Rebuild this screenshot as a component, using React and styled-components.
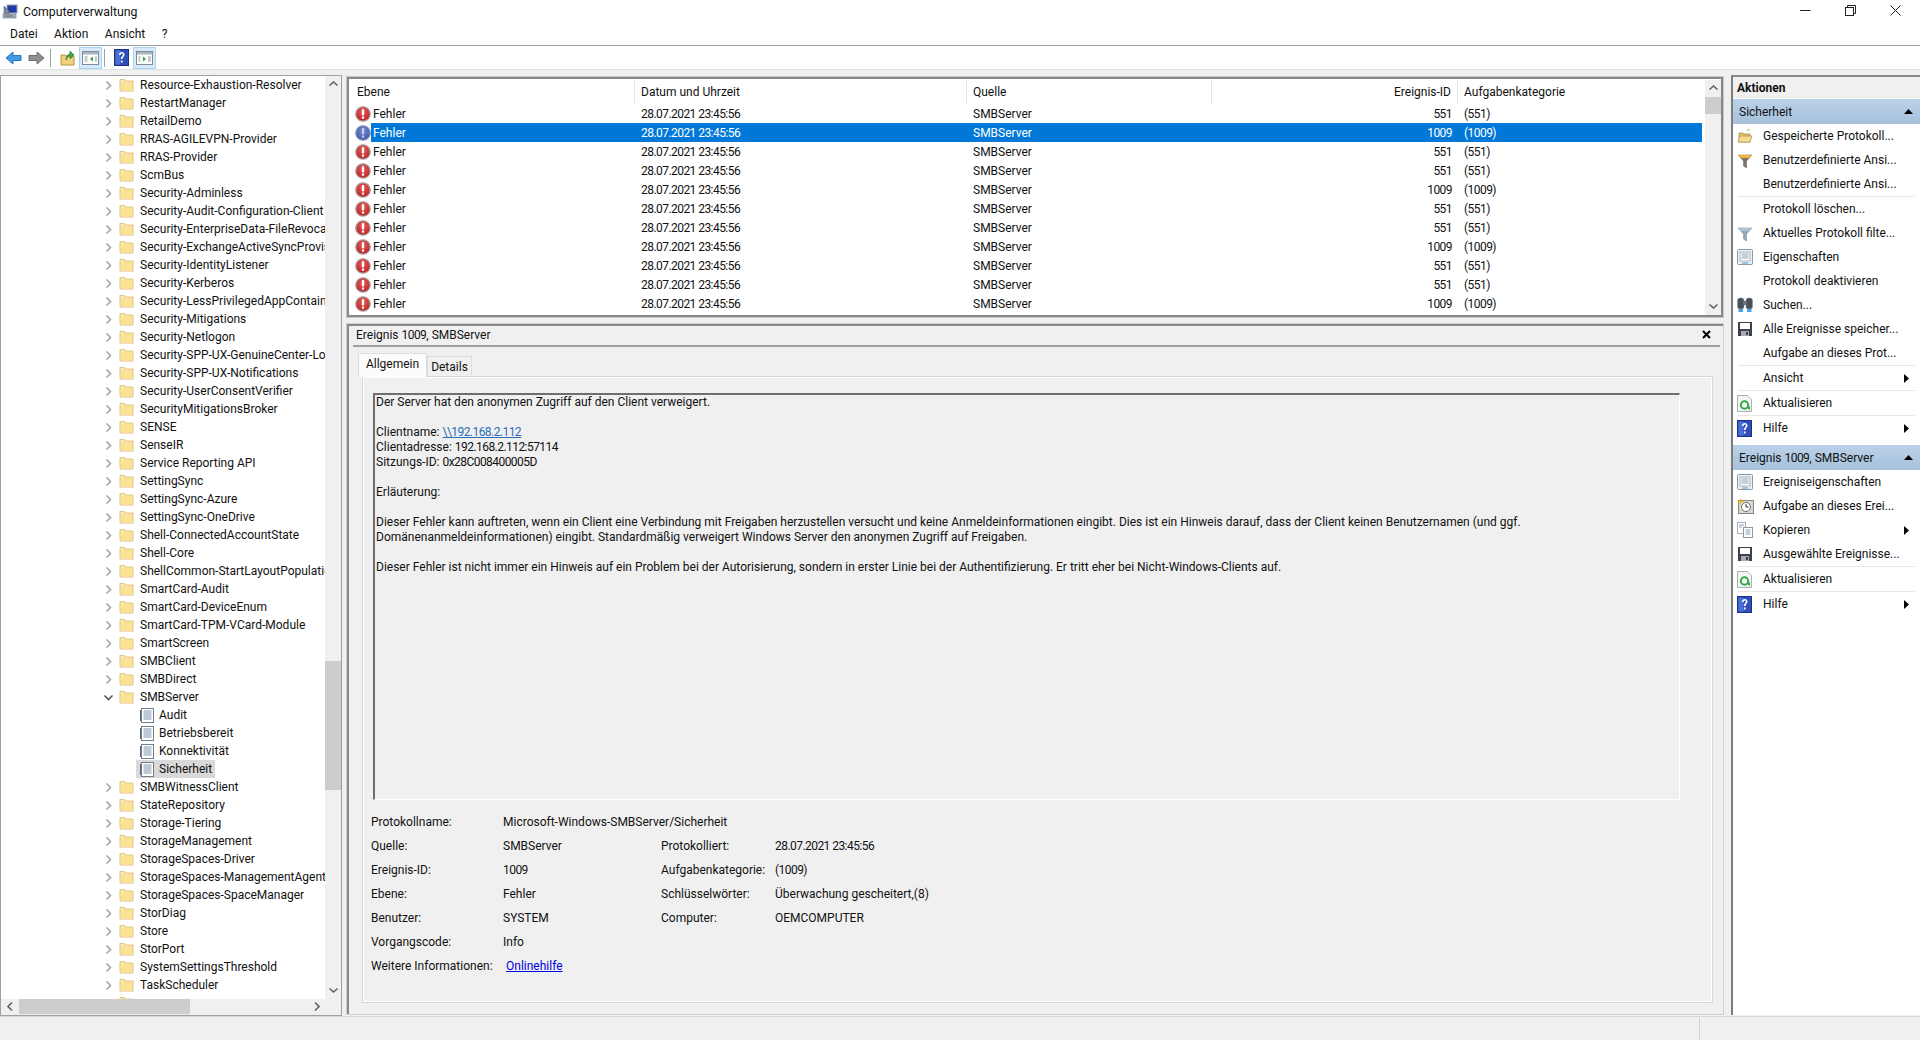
import React from 'react';
import styled, { createGlobalStyle } from 'styled-components';

const GlobalStyle = createGlobalStyle`
  html, body { margin: 0; padding: 0; background: #f0f0f0; }
  body { font-family: Roboto, "Open Sans", "Liberation Sans", sans-serif; font-size: 12px; color: #111; }
  * { box-sizing: border-box; }
`;

/* window chrome */
const Page = styled.div`
  width: 1920px;
  height: 1040px;
  display: flex;
  flex-direction: column;
  overflow: hidden;
  background: #f0f0f0;
`;

const TitleBar = styled.div`
  height: 23px;
  display: flex;
  align-items: center;
  background: #fff;
  padding-left: 2px;
  gap: 5px;
  font-size: 12.3px;
`;

const TitleText = styled.span`
  flex: 1;
`;

const WinControls = styled.div`
  display: flex;
  align-items: center;
  gap: 34px;
  padding-right: 19px;
  margin-top: -3px;
`;

const MenuBar = styled.div`
  height: 23px;
  display: flex;
  align-items: center;
  background: #fff;
  border-bottom: 1px solid #a0a0a0;
  padding: 0 0 1px 10px;
  gap: 16.5px;
`;

const Toolbar = styled.div`
  height: 24px;
  display: flex;
  align-items: center;
  background: #fff;
  border-bottom: 1px solid #e2e2e2;
  padding-left: 5px;
`;

const ArrowSlot = styled.div`
  display: flex;
  margin-left: ${(p) => p.$gap || 0}px;
`;

const ToolButton = styled.div`
  width: 23px;
  height: 22px;
  display: flex;
  align-items: center;
  justify-content: center;
  background: ${(p) => (p.$active ? '#d8eafa' : 'transparent')};
  border: 1px solid ${(p) => (p.$active ? '#a8d4f6' : 'transparent')};
`;

const ToolSep = styled.div`
  width: 1px;
  height: 18px;
  background: #a0a0a0;
  margin: 0 ${(p) => p.$r}px 0 ${(p) => p.$l}px;
`;

const Workspace = styled.div`
  flex: 1;
  display: flex;
  gap: 4px;
  padding-top: 5px;
  min-height: 0;
`;

const StatusBar = styled.div`
  height: 24px;
  border-top: 1px solid #d4d4d4;
  display: flex;
  justify-content: flex-end;
  padding-right: 220px;
`;

const StatusDivider = styled.div`
  width: 1px;
  height: 21px;
  margin-top: 1px;
  background: #d0d0d0;
`;

/* digits are narrower in the original UI font */
const Num = styled.span`
  letter-spacing: -0.55px;
`;

/* left tree */
const TreePane = styled.div`
  width: 342px;
  border: 1px solid #a0a0a0;
  display: flex;
  flex-direction: column;
  background: #f0f0f0;
`;

const TreeBody = styled.div`
  flex: 1;
  min-height: 0;
  display: flex;
`;

const TreeList = styled.div`
  flex: 1;
  min-width: 0;
  background: #fff;
  overflow: hidden;
`;

const TreeRow = styled.div`
  height: 18px;
  display: flex;
  align-items: center;
  white-space: nowrap;
  padding-left: 99px;
`;

const Chevron = styled.span`
  width: 16px;
  margin-right: 3px;
  display: flex;
  justify-content: center;
  flex: none;
`;

const RowLabel = styled.span`
  margin-left: 6px;
`;

const ChildRow = styled.div`
  height: 18px;
  display: flex;
  align-items: center;
  white-space: nowrap;
  margin-left: 135px;
  padding: 0 4px;
  width: ${(p) => (p.$current ? '79px' : 'auto')};
  background: ${(p) => (p.$current ? '#d9d9d9' : 'transparent')};
`;

const ChildLabel = styled.span`
  margin-left: 5px;
`;

const VBar = styled.div`
  width: 16px;
  flex: none;
  display: flex;
  flex-direction: column;
  align-items: center;
  background: #f0f0f0;
`;

const BarArrow = styled.div`
  height: 17px;
  width: 100%;
  flex: none;
  display: flex;
  align-items: center;
  justify-content: center;
`;

const BarTrack = styled.div`
  flex: 1;
  width: 100%;
  min-height: 0;
`;

const BarThumb = styled.div`
  width: 100%;
  height: ${(p) => p.$size}px;
  margin-top: ${(p) => p.$offset}px;
  background: #cdcdcd;
`;

const HBar = styled.div`
  height: 16px;
  flex: none;
  display: flex;
  align-items: flex-start;
  padding-right: 16px;
`;

const HArrow = styled.div`
  width: 18px;
  height: 15px;
  flex: none;
  display: flex;
  align-items: center;
  justify-content: center;
`;

const HTrack = styled.div`
  flex: 1;
  height: 15px;
`;

const HThumb = styled.div`
  width: 171px;
  height: 15px;
  background: #cdcdcd;
`;

/* centre column */
const CenterColumn = styled.div`
  width: 1379px;
  margin: 1px 0 1px 0;
  display: flex;
  flex-direction: column;
  gap: 5px;
`;

const ListPane = styled.div`
  height: 242px;
  flex: none;
  display: flex;
  background: #fff;
  border: 1px solid #c6c6c6;
  box-shadow: inset 0 0 0 2px #888;
  padding: 3px 2px 2px 4px;
  margin-right: 1px;
`;

const ListMain = styled.div`
  flex: 1;
  min-width: 0;
  overflow: hidden;
`;

const ColumnHeader = styled.div`
  height: 24px;
  display: grid;
  grid-template-columns: 284px 332px 245px 246px auto;
  width: 1351px;
  align-items: stretch;
`;

const HeadCell = styled.div`
  display: flex;
  align-items: center;
  padding: 0 6px;
  border-right: 1px solid #e5e5e5;
  justify-content: ${(p) => (p.$right ? 'flex-end' : 'flex-start')};
  &:last-child { border-right: none; }
`;

const EventRow = styled.div`
  height: 19px;
  display: grid;
  grid-template-columns: 284px 332px 245px 246px auto;
  width: 1351px;
  align-items: center;
`;

const EventLevel = styled.div`
  display: flex;
  align-items: center;
  height: 19px;
  padding-left: 4px;
`;

const SelectBand = styled.div`
  height: 19px;
  display: flex;
  align-items: center;
  flex: 1;
  background: ${(p) => (p.$selected ? '#0078d7' : 'transparent')};
  color: ${(p) => (p.$selected ? '#fff' : 'inherit')};
  padding-left: 2px;
`;

const EventCell = styled.div`
  height: 19px;
  display: flex;
  align-items: center;
  padding: 0 6px;
  background: ${(p) => (p.$selected ? '#0078d7' : 'transparent')};
  color: ${(p) => (p.$selected ? '#fff' : 'inherit')};
  justify-content: ${(p) => (p.$right ? 'flex-end' : 'flex-start')};
`;

const DetailPane = styled.div`
  flex: 1;
  min-height: 0;
  display: flex;
  flex-direction: column;
  border: 1px solid #d0d0d0;
  box-shadow: inset 2px 2px 0 #888;
  padding: 2px 3px 11px 6px;
  margin-right: 1px;
`;

const DetailHead = styled.div`
  height: 21px;
  flex: none;
  display: flex;
  align-items: center;
  justify-content: space-between;
  border-bottom: 2px solid #a0a0a0;
  padding: 0 9px 2px 3px;
`;

const Tabs = styled.div`
  display: flex;
  align-items: flex-end;
  height: 29px;
  flex: none;
  padding-left: 5px;
`;

const Tab = styled.div`
  display: flex;
  align-items: center;
  justify-content: center;
  width: ${(p) => p.$w}px;
  height: ${(p) => (p.$active ? 24 : 20)}px;
  padding-bottom: ${(p) => (p.$active ? 3 : 0)}px;
  background: ${(p) => (p.$active ? '#fcfcfc' : '#f0f0f0')};
  border: 1px solid #dcdcdc;
  border-bottom: none;
  margin-bottom: ${(p) => (p.$active ? -1 : 0)}px;
  z-index: 1;
`;

const TabPanel = styled.div`
  flex: 1;
  min-height: 0;
  margin: 0 7px 0 9px;
  border: 1px solid #d6d6d6;
  box-shadow: inset 0 0 0 1px #fff;
  padding: 16px 32px 0 10px;
  display: flex;
  flex-direction: column;
`;

const MessageBox = styled.div`
  height: 407px;
  flex: none;
  border: 2px solid #6e6e6e;
  border-right: 1px solid #fff;
  border-bottom: 1px solid #fff;
  padding: 0 1px;
  line-height: 15px;
`;

const LinkText = styled.span`
  color: ${(p) => p.$color || '#2a6db5'};
  text-decoration: underline;
  margin-left: ${(p) => p.$indent || 0}px;
`;

const Fields = styled.div`
  margin-top: 10px;
  margin-left: -2px;
  display: grid;
  grid-template-columns: 132px 158px 114px auto;
  grid-auto-rows: 24px;
  align-items: center;
  white-space: nowrap;
`;

const FullValue = styled.div`
  grid-column: span 3;
`;

/* right actions */
const ActionsPane = styled.div`
  flex: 1;
  min-width: 0;
  display: flex;
  flex-direction: column;
  background: #fff;
  border-left: 2px solid #7d7d7d;
  border-top: 2px solid #8a8a8a;
  margin-left: 2px;
  margin-bottom: 1px;
`;

const ActionsHead = styled.div`
  height: 21px;
  flex: none;
  display: flex;
  align-items: center;
  padding-left: 4px;
  background: #f0f0f0;
  font-weight: 700;
`;

const GroupHead = styled.div`
  height: 25px;
  flex: none;
  display: flex;
  align-items: center;
  justify-content: space-between;
  padding: 0 7px 0 6px;
  margin-top: 1px;
  background: linear-gradient(#bad1e8, #a7c1dc);
`;

const Action = styled.div`
  height: ${(p) => (p.$line ? 25 : 24)}px;
  flex: none;
  display: flex;
  align-items: center;
  padding: ${(p) => (p.$line ? '1px' : '0')} 9px 0 4px;
  background: ${(p) => (p.$line ? 'linear-gradient(#e6e6e6, #e6e6e6) 5px 0 / calc(100% - 10px) 1px no-repeat' : 'none')};
`;

const ActionIcon = styled.span`
  width: 21px;
  height: 18px;
  flex: none;
  display: flex;
  align-items: center;
  margin-right: 5px;
`;

const ActionText = styled.span`
  flex: 1;
  white-space: nowrap;
`;

const GroupGap = styled.div`
  height: ${(p) => p.$h}px;
  flex: none;
`;

/* drawings */
const AppIcon = () => (
  <svg width="16" height="16" viewBox="0 0 16 16">
    <rect x="5" y="1" width="10" height="8" fill="#2f3f8f" stroke="#8fa0b8" />
    <rect x="6.5" y="2.5" width="7" height="5" fill="#1b3bb0" />
    <path d="M2 2l5 5v3H2z" fill="#7b8a9e" stroke="#56616e" strokeWidth=".6" />
    <rect x="1" y="10" width="13" height="4" fill="#a9b1ba" stroke="#6f7780" strokeWidth=".6" />
    <rect x="3" y="11.5" width="8" height="1" fill="#5c6570" />
  </svg>
);

const Minimize = () => (
  <svg width="11" height="11" viewBox="0 0 11 11"><path d="M0 5.5h10.5" stroke="#222" /></svg>
);

const Restore = () => (
  <svg width="11" height="11" viewBox="0 0 11 11" fill="none" stroke="#222">
    <rect x=".5" y="2.5" width="8" height="8" />
    <path d="M2.5 2.5v-2h8v8h-2" />
  </svg>
);

const CloseIcon = () => (
  <svg width="11" height="11" viewBox="0 0 11 11"><path d="M.5.5l10 10M10.5.5l-10 10" stroke="#222" /></svg>
);

const ArrowIcon = ({ back, color, edge }) => (
  <svg width="17" height="14" viewBox="0 0 17 14">
    <path
      d={back ? 'M1 7l7-6v3.500h8v5H8V13z' : 'M16 7L9 1v3.500H1v5h8V13z'}
      fill={color}
      stroke={edge}
      strokeLinejoin="round"
    />
  </svg>
);

const UpFolder = () => (
  <svg width="15" height="16" viewBox="0 0 15 16">
    <path d="M1 5h4l1 1h8v9H1z" fill="#f1cf7c" stroke="#b8933f" />
    <path d="M6 10c0-4 2-6 4-6V1l4 4-4 4V6c-1.500 0-3 1-4 4z" fill="#3fa64b" stroke="#2b7c35" strokeWidth=".7" />
  </svg>
);

const PaneIcon = ({ right }) => (
  <svg width="17" height="14" viewBox="0 0 17 14">
    <rect x=".5" y=".5" width="16" height="13" fill="#fff" stroke="#7d8b99" />
    <rect x="1" y="1" width="15" height="2.500" fill="#a9b7c4" />
    {right ? (
      <>
        <path d="M2.500 6h2M2.500 8h2M2.500 10h2M12 6h3M12 8h3M12 10h3" stroke="#8c98a4" />
        <path d="M7 5.500l3 2.500-3 2.500z" fill="#37a03f" />
      </>
    ) : (
      <>
        <path d="M2.500 6h3M2.500 8h3M2.500 10h3M13 6h2M13 8h2M13 10h2" stroke="#8c98a4" />
        <path d="M11 5.500L8 8l3 2.500z" fill="#37a03f" />
      </>
    )}
  </svg>
);

const HelpIcon = () => (
  <svg width="15" height="17" viewBox="0 0 15 17">
    <rect x=".5" y=".5" width="14" height="16" fill="#2f4fb8" stroke="#1c2f80" />
    <rect x="1.500" y="1.500" width="5" height="14" fill="#4a6fd6" />
    <path
      d="M5 6c0-2 1.200-3 2.800-3S10.500 4 10.500 5.800c0 2-2 2.200-2 4.200H7c0-2.800 1.800-2.800 1.800-4.300C8.800 5 8.400 4.500 7.800 4.500S6.800 5 6.700 6z"
      fill="#fff"
    />
    <rect x="7" y="11.500" width="1.600" height="2" fill="#fff" />
  </svg>
);

const Chev = ({ open }) => (
  <svg width="11" height="11" viewBox="0 0 11 11" fill="none" stroke={open ? '#555' : '#a6a6a6'} strokeWidth="1.600">
    <path d={open ? 'M1.500 3.500l4 4 4-4' : 'M3.500 1.500l4 4-4 4'} />
  </svg>
);

const FolderIcon = () => (
  <svg width="15" height="14" viewBox="0 0 15 14" style={{ flex: 'none' }}>
    <path d="M1 1.500h4.500V3H14v10H1z" fill="#fdeab0" stroke="#dfc47c" />
    <rect x="2" y="4" width="11" height="8.500" fill="#fbe295" />
  </svg>
);

const LogIcon = () => (
  <svg width="14" height="15" viewBox="0 0 14 15" style={{ flex: 'none' }}>
    <rect x="1.500" y=".5" width="12" height="14" fill="#fff" stroke="#6f7d8c" />
    <path d="M3.500 3h8M3.500 5h8M3.500 7h8M3.500 9h8M3.500 11h8" stroke="#7d94ad" />
    <path d="M.5 2v11" stroke="#5a6875" />
  </svg>
);

const ErrorIcon = ({ selected }) => (
  <svg width="16" height="16" viewBox="0 0 16 16" style={{ flex: 'none' }}>
    <defs>
      <radialGradient id={selected ? 'errSel' : 'errNorm'} cx="50%" cy="35%" r="65%">
        <stop offset="0" stopColor={selected ? '#7a86d0' : '#e85a5a'} />
        <stop offset="1" stopColor={selected ? '#3f5aa8' : '#bb2222'} />
      </radialGradient>
    </defs>
    <circle cx="8" cy="8" r="7.200" fill={`url(#${selected ? 'errSel' : 'errNorm'})`} stroke={selected ? '#7f8fb8' : '#a89a9a'} strokeWidth="1.300" />
    <rect x="6.800" y="3" width="2.400" height="6.500" rx=".8" fill={selected ? '#c8ccf0' : '#fff'} />
    <rect x="6.900" y="10.500" width="2.200" height="2.200" fill={selected ? '#c8ccf0' : '#fff'} />
  </svg>
);

const SmallArrow = ({ dir }) => {
  const paths = {
    up: 'M1.500 6.500L5.500 3l4 3.500',
    down: 'M1.500 3.500l4 3.500 4-3.500',
    left: 'M7 1.500L3 5.500l4 4',
    right: 'M4 1.500l4 4-4 4',
  };
  return (
    <svg width="11" height="11" viewBox="0 0 11 11" fill="none" stroke="#606060" strokeWidth="1.600">
      <path d={paths[dir]} />
    </svg>
  );
};

const Tri = ({ right }) => (
  <svg width="9" height="9" viewBox="0 0 9 9">
    <path d={right ? 'M2 0l5 4.500L2 9z' : 'M0 7l4.500-5L9 7z'} fill="#000" />
  </svg>
);

const X = () => (
  <svg width="9" height="9" viewBox="0 0 9 9"><path d="M1 1l7 7M8 1L1 8" stroke="#000" strokeWidth="2" /></svg>
);

const OpenLogIcon = () => (
  <svg width="16" height="16" viewBox="0 0 16 16">
    <path d="M2 5h4l1 1h6v8H2z" fill="#e3c272" stroke="#a88a45" strokeWidth=".8" />
    <path d="M1 14l2-6h12l-2 6z" fill="#f6dc92" stroke="#b6964c" strokeWidth=".8" />
    <path d="M10 2h3" stroke="#7ac27a" />
  </svg>
);

const FunnelIcon = ({ star }) => (
  <svg width="16" height="17" viewBox="0 0 16 17">
    <path d="M1 3h14L9.500 9v7L6.500 14V9z" fill={star ? '#7d7368' : '#90a7bd'} stroke={star ? '#6a6055' : '#6f8599'} strokeWidth=".5" />
    <path d="M1 3h14l-3 3H4z" fill={star ? '#f3b33d' : '#a9c3d6'} />
  </svg>
);

const PropsIcon = () => (
  <svg width="16" height="16" viewBox="0 0 16 16">
    <rect x=".5" y=".5" width="15" height="15" rx="1" fill="#eef1f3" stroke="#8d98a3" />
    <rect x="3" y="3" width="10" height="9" fill="#fff" stroke="#a9b3bd" />
    <path d="M4.500 5h7M4.500 7h7M4.500 9h7" stroke="#8aa0b4" />
    <path d="M5 14h6" stroke="#5cb0e0" strokeWidth="1.200" />
  </svg>
);

const FindIcon = () => (
  <svg width="16" height="16" viewBox="0 0 16 16">
    <rect x=".5" y="1" width="6.500" height="11" rx="2.500" fill="#4a5058" stroke="#8a9098" strokeWidth=".5" />
    <rect x="9" y="1" width="6.500" height="11" rx="2.500" fill="#4a5058" stroke="#8a9098" strokeWidth=".5" />
    <rect x="6" y="4" width="4" height="4" fill="#6a7078" />
    <rect x="1.500" y="12" width="4.500" height="3" fill="#4da3dc" />
    <rect x="10" y="12" width="4.500" height="3" fill="#4da3dc" />
  </svg>
);

const SaveIcon = () => (
  <svg width="16" height="16" viewBox="0 0 16 16">
    <path d="M1 1h14v14H1z" fill="#3d4248" />
    <rect x="3" y="2" width="10" height="6" fill="#fff" />
    <rect x="4" y="10" width="8" height="5" fill="#a8acb0" />
    <rect x="9" y="11" width="2" height="3" fill="#3d4248" />
  </svg>
);

const RefreshIcon = () => (
  <svg width="15" height="17" viewBox="0 0 15 17">
    <path d="M.5.5h10l4 4v12H.5z" fill="#f4f5f6" stroke="#a9adb2" />
    <circle cx="7.500" cy="10" r="3.700" fill="none" stroke="#38a848" strokeWidth="2" />
    <path d="M10 13l3 2v-4z" fill="#38a848" />
  </svg>
);

const TaskIcon = () => (
  <svg width="17" height="17" viewBox="0 0 17 17">
    <rect x="1.500" y="2.500" width="15" height="13" fill="#ddd8d2" stroke="#8c857c" />
    <circle cx="9" cy="9" r="4.500" fill="#fff" stroke="#6c6c6c" />
    <path d="M9 6v3h2.500" fill="none" stroke="#333" />
    <path d="M3.500 0l1 2.500 2.500 1-2.500 1-1 2.500-1-2.500L0 3.500l2.500-1z" fill="#f0b52c" />
  </svg>
);

const CopyIcon = () => (
  <svg width="16" height="16" viewBox="0 0 16 16">
    <rect x=".5" y=".5" width="8" height="11" fill="#fff" stroke="#a6adb5" />
    <rect x="6.500" y="5.500" width="9" height="10" fill="#fff" stroke="#8f97a0" />
    <path d="M2 3h5M2 5h3M8.500 8h5M8.500 10h5M8.500 12h5" stroke="#8aa0b4" />
  </svg>
);

/* data */
const treeItems = [
  'Resource-Exhaustion-Resolver', 'RestartManager', 'RetailDemo', 'RRAS-AGILEVPN-Provider', 'RRAS-Provider', 'ScmBus',
  'Security-Adminless', 'Security-Audit-Configuration-Client', 'Security-EnterpriseData-FileRevocation',
  'Security-ExchangeActiveSyncProvisioning', 'Security-IdentityListener', 'Security-Kerberos',
  'Security-LessPrivilegedAppContainer', 'Security-Mitigations', 'Security-Netlogon',
  'Security-SPP-UX-GenuineCenter-Logging', 'Security-SPP-UX-Notifications', 'Security-UserConsentVerifier',
  'SecurityMitigationsBroker', 'SENSE', 'SenseIR', 'Service Reporting API', 'SettingSync', 'SettingSync-Azure',
  'SettingSync-OneDrive', 'Shell-ConnectedAccountState', 'Shell-Core', 'ShellCommon-StartLayoutPopulation',
  'SmartCard-Audit', 'SmartCard-DeviceEnum', 'SmartCard-TPM-VCard-Module', 'SmartScreen', 'SMBClient', 'SMBDirect',
  { name: 'SMBServer', open: true },
  { name: 'Audit', child: true }, { name: 'Betriebsbereit', child: true }, { name: 'Konnektivität', child: true },
  { name: 'Sicherheit', child: true, current: true },
  'SMBWitnessClient', 'StateRepository', 'Storage-Tiering', 'StorageManagement', 'StorageSpaces-Driver',
  'StorageSpaces-ManagementAgent', 'StorageSpaces-SpaceManager', 'StorDiag', 'Store', 'StorPort',
  'SystemSettingsThreshold', 'TaskScheduler', '\u00a0',
];

const eventIds = ['551', '1009', '551', '551', '1009', '551', '551', '1009', '551', '551', '1009', '551'];

const firstActions = [
  { icon: <OpenLogIcon />, text: 'Gespeicherte Protokoll...' },
  { icon: <FunnelIcon star />, text: 'Benutzerdefinierte Ansi...' },
  { text: 'Benutzerdefinierte Ansi...' },
  { text: 'Protokoll löschen...', line: true },
  { icon: <FunnelIcon />, text: 'Aktuelles Protokoll filte...' },
  { icon: <PropsIcon />, text: 'Eigenschaften' },
  { text: 'Protokoll deaktivieren' },
  { icon: <FindIcon />, text: 'Suchen...' },
  { icon: <SaveIcon />, text: 'Alle Ereignisse speicher...' },
  { text: 'Aufgabe an dieses Prot...' },
  { text: 'Ansicht', more: true, line: true },
  { icon: <RefreshIcon />, text: 'Aktualisieren', line: true },
  { icon: <HelpIcon />, text: 'Hilfe', more: true, line: true },
];

const secondActions = [
  { icon: <PropsIcon />, text: 'Ereigniseigenschaften' },
  { icon: <TaskIcon />, text: 'Aufgabe an dieses Erei...' },
  { icon: <CopyIcon />, text: 'Kopieren', more: true },
  { icon: <SaveIcon />, text: 'Ausgewählte Ereignisse...' },
  { icon: <RefreshIcon />, text: 'Aktualisieren', line: true },
  { icon: <HelpIcon />, text: 'Hilfe', more: true, line: true },
];

const ActionList = ({ items }) =>
  items.map((a, i) => (
    <Action key={i} $line={a.line}>
      <ActionIcon>{a.icon}</ActionIcon>
      <ActionText>{a.text}</ActionText>
      {a.more && <Tri right />}
    </Action>
  ));

const Tree = () => (
  <TreePane>
    <TreeBody>
      <TreeList>
        {treeItems.map((item) => {
          const t = typeof item === 'string' ? { name: item } : item;
          if (t.child) {
            return (
              <ChildRow key={t.name} $current={t.current}>
                <LogIcon />
                <ChildLabel>{t.name}</ChildLabel>
              </ChildRow>
            );
          }
          return (
            <TreeRow key={t.name}>
              <Chevron><Chev open={t.open} /></Chevron>
              <FolderIcon />
              <RowLabel>{t.name}</RowLabel>
            </TreeRow>
          );
        })}
      </TreeList>
      <VBar>
        <BarArrow><SmallArrow dir="up" /></BarArrow>
        <BarTrack><BarThumb $size={129} $offset={568} /></BarTrack>
        <BarArrow><SmallArrow dir="down" /></BarArrow>
      </VBar>
    </TreeBody>
    <HBar>
      <HArrow><SmallArrow dir="left" /></HArrow>
      <HTrack><HThumb /></HTrack>
      <HArrow><SmallArrow dir="right" /></HArrow>
    </HBar>
  </TreePane>
);

const EventList = () => (
  <ListPane>
    <ListMain>
      <ColumnHeader>
        <HeadCell>Ebene</HeadCell>
        <HeadCell>Datum und Uhrzeit</HeadCell>
        <HeadCell>Quelle</HeadCell>
        <HeadCell $right>Ereignis-ID</HeadCell>
        <HeadCell>Aufgabenkategorie</HeadCell>
      </ColumnHeader>
      {eventIds.map((id, i) => {
        const selected = i === 1;
        return (
          <EventRow key={i}>
            <EventLevel>
              <ErrorIcon selected={selected} />
              <SelectBand $selected={selected}>Fehler</SelectBand>
            </EventLevel>
            <EventCell $selected={selected}><Num>28.07.2021 23:45:56</Num></EventCell>
            <EventCell $selected={selected}>SMBServer</EventCell>
            <EventCell $selected={selected} $right><Num>{id}</Num></EventCell>
            <EventCell $selected={selected}><Num>({id})</Num></EventCell>
          </EventRow>
        );
      })}
    </ListMain>
    <VBar>
      <BarArrow><SmallArrow dir="up" /></BarArrow>
      <BarTrack><BarThumb $size={17} $offset={0} /></BarTrack>
      <BarArrow><SmallArrow dir="down" /></BarArrow>
    </VBar>
  </ListPane>
);

const EventDetail = () => (
  <DetailPane>
    <DetailHead>
      <span>Ereignis <Num>1009</Num>, SMBServer</span>
      <X />
    </DetailHead>
    <Tabs>
      <Tab $active $w={69}>Allgemein</Tab>
      <Tab $w={45}>Details</Tab>
    </Tabs>
    <TabPanel>
      <MessageBox>
        Der Server hat den anonymen Zugriff auf den Client verweigert.<br /><br />
        Clientname: <LinkText><Num>\\192.168.2.112</Num></LinkText><br />
        Clientadresse: <Num>192.168.2.112:57114</Num><br />
        Sitzungs-ID: <Num>0x28C008400005D</Num><br /><br />
        Erläuterung:<br /><br />
        Dieser Fehler kann auftreten, wenn ein Client eine Verbindung mit Freigaben herzustellen versucht und keine Anmeldeinformationen eingibt. Dies ist ein Hinweis darauf, dass der Client keinen Benutzernamen (und ggf.<br />
        Domänenanmeldeinformationen) eingibt. Standardmäßig verweigert Windows Server den anonymen Zugriff auf Freigaben.<br /><br />
        Dieser Fehler ist nicht immer ein Hinweis auf ein Problem bei der Autorisierung, sondern in erster Linie bei der Authentifizierung. Er tritt eher bei Nicht-Windows-Clients auf.
      </MessageBox>
      <Fields>
        <div>Protokollname:</div><FullValue>Microsoft-Windows-SMBServer/Sicherheit</FullValue>
        <div>Quelle:</div><div>SMBServer</div><div>Protokolliert:</div><div><Num>28.07.2021 23:45:56</Num></div>
        <div>Ereignis-ID:</div><div><Num>1009</Num></div><div>Aufgabenkategorie:</div><div><Num>(1009)</Num></div>
        <div>Ebene:</div><div>Fehler</div><div>Schlüsselwörter:</div><div>Überwachung gescheitert,(8)</div>
        <div>Benutzer:</div><div>SYSTEM</div><div>Computer:</div><div>OEMCOMPUTER</div>
        <div>Vorgangscode:</div><FullValue>Info</FullValue>
        <div>Weitere Informationen:</div><FullValue><LinkText $color="#0000e0" $indent={3}>Onlinehilfe</LinkText></FullValue>
      </Fields>
    </TabPanel>
  </DetailPane>
);

const App = () => (
  <Page>
    <GlobalStyle />
    <TitleBar>
      <AppIcon />
      <TitleText>Computerverwaltung</TitleText>
      <WinControls>
        <Minimize />
        <Restore />
        <CloseIcon />
      </WinControls>
    </TitleBar>
    <MenuBar>
      <span>Datei</span>
      <span>Aktion</span>
      <span>Ansicht</span>
      <span>?</span>
    </MenuBar>
    <Toolbar>
      <ArrowIcon back color="#3d9be8" edge="#2a78c0" />
      <ArrowSlot $gap={6}><ArrowIcon color="#8e8e8e" edge="#707070" /></ArrowSlot>
      <ToolSep $l={5} $r={5} />
      <ToolButton><UpFolder /></ToolButton>
      <ToolButton $active><PaneIcon /></ToolButton>
      <ToolSep $l={2} $r={5} />
      <ToolButton><HelpIcon /></ToolButton>
      <ToolButton $active><PaneIcon right /></ToolButton>
    </Toolbar>
    <Workspace>
      <Tree />
      <CenterColumn>
        <EventList />
        <EventDetail />
      </CenterColumn>
      <ActionsPane>
        <ActionsHead>Aktionen</ActionsHead>
        <GroupHead>Sicherheit<Tri /></GroupHead>
        <ActionList items={firstActions} />
        <GroupGap $h={4} />
        <GroupHead><span>Ereignis <Num>1009</Num>, SMBServer</span><Tri /></GroupHead>
        <ActionList items={secondActions} />
      </ActionsPane>
    </Workspace>
    <StatusBar><StatusDivider /></StatusBar>
  </Page>
);

export default App;
